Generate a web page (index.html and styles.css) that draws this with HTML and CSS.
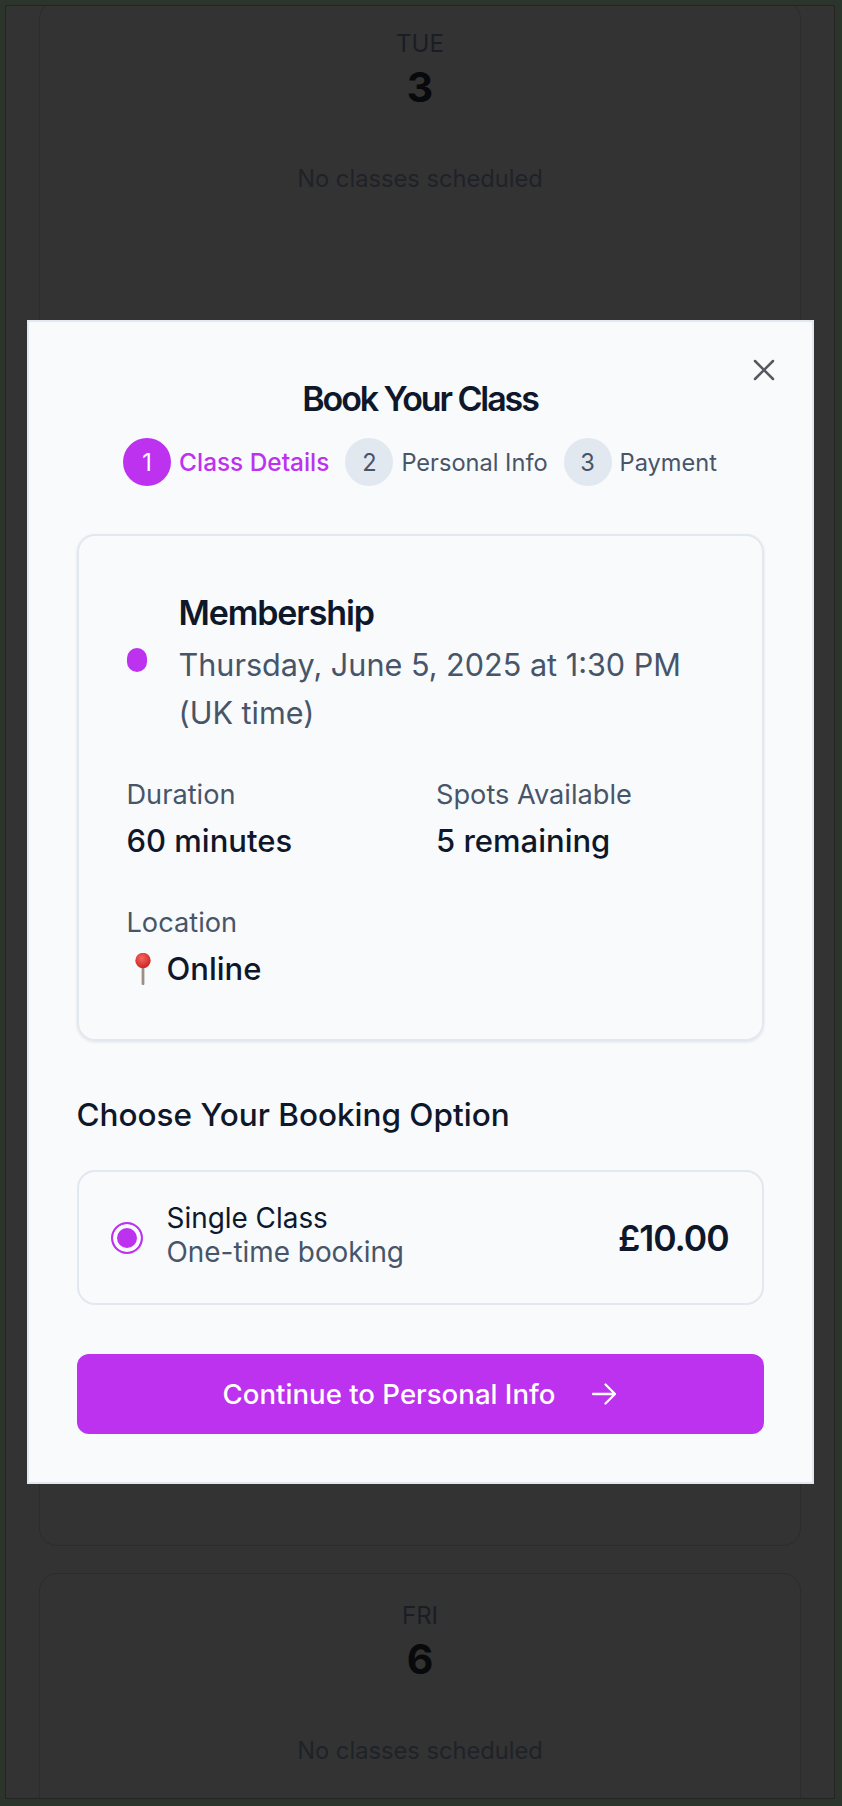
FILE: index.html
```html
<!doctype html>
<html lang="en-GB">
  <head>
    <meta charset="utf-8" />
    <title>Book Your Class</title>
    <link rel="stylesheet" href="styles.css">
  </head>

  <body>
    <div class="schedule">
      <div class="day-card">
        <div class="day-name">TUE</div>
        <div class="day-number">3</div>
        <p class="day-empty">No classes scheduled</p>
      </div>
      <div class="day-card"></div>
      <div class="day-card"></div>
      <div class="day-card">
        <div class="day-name">FRI</div>
        <div class="day-number">6</div>
        <p class="day-empty">No classes scheduled</p>
      </div>
    </div>

    <div class="overlay">
      <div class="modal">
        <button class="close-button" aria-label="Close">
          <svg width="32" height="32" viewBox="0 0 32 32" fill="none" stroke="currentColor" stroke-width="2.5" stroke-linecap="round">
            <path d="M7 7L25 25M25 7L7 25" />
          </svg>
        </button>

        <h2 class="modal-title">Book Your Class</h2>

        <div class="steps">
          <div class="step active"><span class="step-number">1</span><span>Class Details</span></div>
          <div class="step"><span class="step-number">2</span><span>Personal Info</span></div>
          <div class="step"><span class="step-number">3</span><span>Payment</span></div>
        </div>

        <div class="details">
          <div class="details-head">
            <span class="class-dot"></span>
            <div>
              <h3 class="class-name">Membership</h3>
              <p class="class-date">Thursday, June 5, 2025 at 1:30 PM (UK time)</p>
            </div>
          </div>
          <div class="details-grid">
            <div>
              <div class="detail-label">Duration</div>
              <div class="detail-value">60 minutes</div>
            </div>
            <div>
              <div class="detail-label">Spots Available</div>
              <div class="detail-value">5 remaining</div>
            </div>
            <div>
              <div class="detail-label">Location</div>
              <div class="detail-value location">
                <svg width="32" height="32" viewBox="0 0 32 32">
                  <defs>
                    <radialGradient id="pin-head" cx="0.42" cy="0.35" r="0.7">
                      <stop offset="0" stop-color="#f4685f" />
                      <stop offset="1" stop-color="#c9201f" />
                    </radialGradient>
                  </defs>
                  <rect x="14.6" y="12" width="2.8" height="20" rx="1" fill="#9b8f88" />
                  <circle cx="16" cy="7.5" r="7.7" fill="url(#pin-head)" />
                </svg>
                <span>Online</span>
              </div>
            </div>
          </div>
        </div>

        <h3 class="options-title">Choose Your Booking Option</h3>

        <div class="option">
          <span class="radio"></span>
          <div class="option-text">
            <div class="option-name">Single Class</div>
            <div class="option-note">One-time booking</div>
          </div>
          <div class="option-price">£10.00</div>
        </div>

        <button class="continue-button">
          <span>Continue to Personal Info</span>
          <svg width="26" height="26" viewBox="0 0 26 26" fill="none" stroke="currentColor" stroke-width="2.3" stroke-linecap="round" stroke-linejoin="round">
            <path d="M2 13H24M14.5 3.5L24 13L14.5 22.5" />
          </svg>
        </button>
      </div>
    </div>
  </body>
</html>
```

FILE: styles.css
```css
* {
  box-sizing: border-box;
}

html, body {
  height: 100%;
}

body {
  margin: 0;
  padding: 5px 7px 7px 5px;
  overflow: hidden;
  background-color: #2c352b;
  font-family: Inter, 'Noto Sans', sans-serif;
}

/* Calendar behind the dialog */
.schedule {
  height: 100%;
  padding: 0 33px;
  overflow: hidden;
  background-color: #333;
  border: 1px solid #242424;
}

.day-card {
  height: 497px;
  margin-top: 27px;
  padding-top: 26px;
  border: 1px solid #2c2c2c;
  border-radius: 18px;
  text-align: center;
}

.day-card:first-child {
  margin-top: -5px;
}

.day-name {
  font-size: 24px;
  line-height: 32px;
  color: #1a1d23;
}

.day-number {
  margin-top: 1px;
  font-size: 41px;
  line-height: 52px;
  font-weight: 700;
  color: #08090b;
}

.day-empty {
  margin: 50px 0 0;
  font-size: 23.7px;
  line-height: 32px;
  color: #1f2229;
}

/* Dialog */
.overlay {
  position: fixed;
  top: 0;
  left: 0;
  right: 0;
  bottom: 0;
  display: flex;
  justify-content: center;
  align-items: center;
  padding: 0 2px 2px 0;
}

.modal {
  position: relative;
  width: 787px;
  padding: 57px 48px 48px;
  background-color: #f8fafc;
  border: 2px solid #e2e8f0;
}

.close-button {
  position: absolute;
  top: 32px;
  right: 32px;
  display: flex;
  padding: 0;
  border: none;
  background: none;
  color: #555a60;
}

.modal-title {
  margin: 0;
  font-size: 34px;
  line-height: 40px;
  font-weight: 600;
  letter-spacing: -0.062em;
  text-align: center;
  color: #0f172a;
}

.steps {
  display: flex;
  justify-content: center;
  gap: 16px;
  margin-top: 19px;
}

.step {
  display: flex;
  align-items: center;
  gap: 8px;
  font-size: 23.6px;
  color: #475569;
}

.step-number {
  display: flex;
  justify-content: center;
  align-items: center;
  width: 48px;
  height: 48px;
  border-radius: 50%;
  background-color: #e2e8f0;
}

.step.active {
  color: #bc32ee;
  font-size: 24.4px;
  font-weight: 500;
}

.step.active .step-number {
  background-color: #bc32ee;
  color: #fff;
  font-size: 23.6px;
  font-weight: 400;
}

.details {
  margin-top: 48px;
  padding: 57px 49px 50px 48px;
  border: 2px solid #e2e8f0;
  border-radius: 18px;
  box-shadow: 0 1px 3px rgba(0, 0, 0, 0.1);
}

.details-head {
  display: flex;
  align-items: center;
  gap: 32px;
}

.class-dot {
  flex-shrink: 0;
  width: 20px;
  height: 24px;
  margin-bottom: 10px;
  border-radius: 10px;
  background-color: #bc32ee;
}

.class-name {
  margin: 0;
  font-size: 34px;
  line-height: 40px;
  font-weight: 600;
  letter-spacing: -0.033em;
  color: #0f172a;
}

.class-date {
  margin: 8px 0 0;
  font-size: 30.6px;
  line-height: 48px;
  color: #475569;
}

.details-grid {
  display: grid;
  grid-template-columns: 1fr 1fr;
  gap: 44px 33px;
  margin-top: 40px;
}

.detail-label {
  font-size: 27.2px;
  line-height: 36px;
  color: #475569;
}

.detail-value {
  margin-top: 8px;
  font-size: 31px;
  line-height: 40px;
  font-weight: 450;
  color: #0f172a;
}

.location {
  display: flex;
  align-items: center;
  gap: 8px;
}

.options-title {
  margin: 54px 0 0;
  font-size: 31.5px;
  line-height: 40px;
  font-weight: 550;
  color: #0f172a;
}

.option {
  display: flex;
  align-items: center;
  height: 135px;
  margin-top: 35px;
  padding: 0 33px 0 32px;
  border: 2px solid #e2e8f0;
  border-radius: 18px;
}

.radio {
  flex-shrink: 0;
  width: 32px;
  height: 32px;
  border: 2px solid #bc32ee;
  border-radius: 50%;
  background-color: #bc32ee;
  box-shadow: inset 0 0 0 4px #f8fafc;
}

.option-text {
  flex: 1;
  margin: 0 0 5px 24px;
  font-size: 27.9px;
  line-height: 34px;
}

.option-name {
  color: #0f172a;
}

.option-note {
  color: #475569;
}

.option-price {
  margin-top: 2px;
  font-size: 35.5px;
  font-weight: 600;
  letter-spacing: -0.03em;
  color: #0f172a;
}

.continue-button {
  display: flex;
  justify-content: center;
  align-items: center;
  gap: 36px;
  width: 100%;
  height: 80px;
  margin-top: 49px;
  padding: 0;
  border: none;
  border-radius: 12px;
  background-color: #bc32ee;
  color: #fff;
  font-family: inherit;
  font-size: 27.6px;
  font-weight: 450;
}
```
